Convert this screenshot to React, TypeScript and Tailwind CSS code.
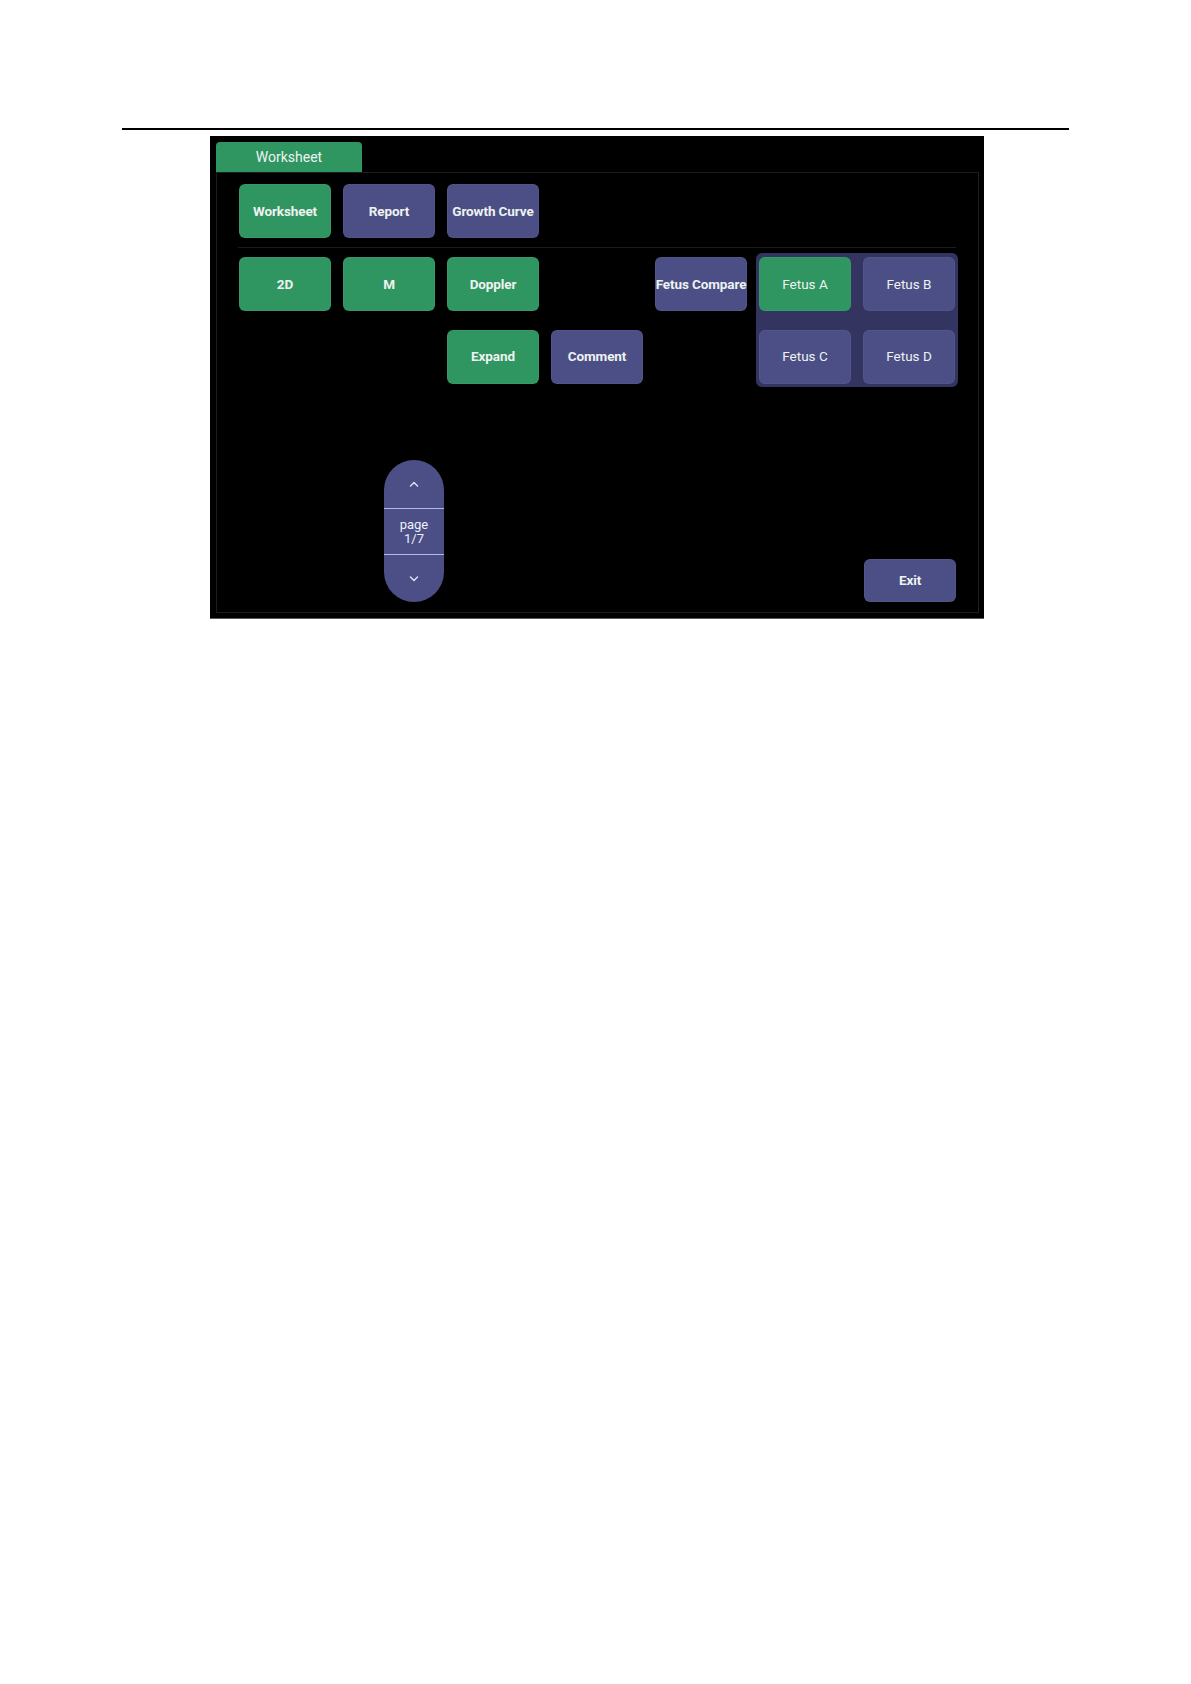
const GREEN = "bg-[#2f9561]";
const INDIGO = "bg-[#4b4f85]";

type Tone = "green" | "indigo";

function Key({ label, tone, bold = true, h = "h-[54px]" }: { label: string; tone: Tone; bold?: boolean; h?: string }) {
    return (
        <div
            className={`${h} w-[92px] rounded-[6px] flex items-center justify-center whitespace-nowrap text-[13.5px] text-[#eef2f0] border border-white/[0.04] ${
                tone === "green" ? GREEN : INDIGO
            } ${bold ? "font-bold tracking-[-0.1px]" : "font-normal"}`}
        >
            {label}
        </div>
    );
}

function Chevron({ up }: { up?: boolean }) {
    return (
        <svg width="10" height="6" viewBox="0 0 10 6" className="text-[#d9dcf5]">
            <polyline
                points={up ? "1.5,5 5,1.5 8.5,5" : "1.5,1 5,4.5 8.5,1"}
                fill="none"
                stroke="currentColor"
                strokeWidth="1.5"
                strokeLinecap="round"
                strokeLinejoin="round"
            />
        </svg>
    );
}

function PageControl() {
    return (
        <div className={`w-[60px] h-[142px] rounded-full ${INDIGO} flex flex-col overflow-hidden text-[#eef0fa] text-[13px] leading-[14px]`}>
            <div className="h-[48px] flex items-center justify-center">
                <Chevron up />
            </div>
            <div className="h-px bg-[#b3b7ee]" />
            <div className="h-[45px] flex flex-col items-center justify-center">
                <span>page</span>
                <span>1/7</span>
            </div>
            <div className="h-px bg-[#b3b7ee]" />
            <div className="flex-1 flex items-center justify-center">
                <Chevron />
            </div>
        </div>
    );
}

export default function App() {
    return (
        <div className="w-[1191px] h-[1684px] bg-white pt-[128px]" style={{ fontFamily: "Roboto, 'Noto Sans', sans-serif" }}>
            <div className="ml-[122px] w-[947px] h-[1.5px] bg-black" />

            {/* device screen */}
            <div className="mt-[6.5px] ml-[210px] w-[774px] h-[483px] bg-black pt-[6px] pl-[6px] pr-[5px] pb-[5px] border-b border-[#5a5a5a] flex flex-col">
                <div className={`h-[30px] w-[146px] rounded-t-[4px] ${GREEN} flex items-center justify-center text-[14px] text-[#eef3f0]`}>
                    Worksheet
                </div>

                <div className="flex-1 border border-[#1d1d1d] pl-[22px] pt-[11px] pr-[22px] pb-[10px] flex flex-col">
                    <div className="flex gap-3">
                        <Key label="Worksheet" tone="green" />
                        <Key label="Report" tone="indigo" />
                        <Key label="Growth Curve" tone="indigo" />
                    </div>

                    <div className="mt-[9px] -ml-px w-[718px] h-px bg-[#1b1b1b]" />

                    <div className="flex items-start mt-[5px]">
                        <div className="grid grid-cols-[repeat(5,92px)] gap-x-3 gap-y-[18.5px] pt-[4px]">
                            <Key label="2D" tone="green" />
                            <Key label="M" tone="green" />
                            <Key label="Doppler" tone="green" />
                            <div />
                            <Key label="Fetus Compare" tone="indigo" />
                            <div />
                            <div />
                            <Key label="Expand" tone="green" />
                            <Key label="Comment" tone="indigo" />
                        </div>

                        <div className="ml-[9px] rounded-[6px] bg-[#33345f] pt-[4px] pb-[3px] px-[3px] grid grid-cols-[repeat(2,92px)] gap-x-3 gap-y-[18.5px]">
                            <Key label="Fetus A" tone="green" bold={false} />
                            <Key label="Fetus B" tone="indigo" bold={false} />
                            <Key label="Fetus C" tone="indigo" bold={false} />
                            <Key label="Fetus D" tone="indigo" bold={false} />
                        </div>
                    </div>

                    <div className="mt-auto flex items-end">
                        <div className="ml-[145px]">
                            <PageControl />
                        </div>
                        <div className="ml-auto">
                            <Key label="Exit" tone="indigo" h="h-[43px]" />
                        </div>
                    </div>
                </div>
            </div>
        </div>
    );
}
